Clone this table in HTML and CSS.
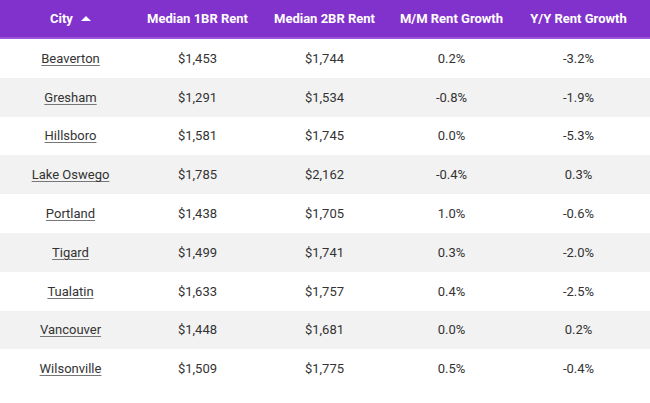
FILE: index.html
```html
<!DOCTYPE html>
<html lang="en">
<head>
<meta charset="utf-8">
<title>Rent Table</title>
<link rel="stylesheet" href="styles.css">
</head>
<body>
<div class="table">
  <div class="row head">
    <div class="cell">City <span class="caret"></span></div>
    <div class="cell">Median 1BR Rent</div>
    <div class="cell">Median 2BR Rent</div>
    <div class="cell">M/M Rent Growth</div>
    <div class="cell">Y/Y Rent Growth</div>
  </div>
  <div class="row"><div class="cell"><a href="#">Beaverton</a></div><div class="cell">$1,453</div><div class="cell">$1,744</div><div class="cell">0.2%</div><div class="cell">-3.2%</div></div>
  <div class="row alt"><div class="cell"><a href="#">Gresham</a></div><div class="cell">$1,291</div><div class="cell">$1,534</div><div class="cell">-0.8%</div><div class="cell">-1.9%</div></div>
  <div class="row"><div class="cell"><a href="#">Hillsboro</a></div><div class="cell">$1,581</div><div class="cell">$1,745</div><div class="cell">0.0%</div><div class="cell">-5.3%</div></div>
  <div class="row alt"><div class="cell"><a href="#">Lake Oswego</a></div><div class="cell">$1,785</div><div class="cell">$2,162</div><div class="cell">-0.4%</div><div class="cell">0.3%</div></div>
  <div class="row"><div class="cell"><a href="#">Portland</a></div><div class="cell">$1,438</div><div class="cell">$1,705</div><div class="cell">1.0%</div><div class="cell">-0.6%</div></div>
  <div class="row alt"><div class="cell"><a href="#">Tigard</a></div><div class="cell">$1,499</div><div class="cell">$1,741</div><div class="cell">0.3%</div><div class="cell">-2.0%</div></div>
  <div class="row"><div class="cell"><a href="#">Tualatin</a></div><div class="cell">$1,633</div><div class="cell">$1,757</div><div class="cell">0.4%</div><div class="cell">-2.5%</div></div>
  <div class="row alt"><div class="cell"><a href="#">Vancouver</a></div><div class="cell">$1,448</div><div class="cell">$1,681</div><div class="cell">0.0%</div><div class="cell">0.2%</div></div>
  <div class="row"><div class="cell"><a href="#">Wilsonville</a></div><div class="cell">$1,509</div><div class="cell">$1,775</div><div class="cell">0.5%</div><div class="cell">-0.4%</div></div>
</div>
</body>
</html>
```

FILE: styles.css
```css
html, body {
  margin: 0;
  padding: 0;
  background: #ffffff;
}
body {
  font-family: Roboto, "Liberation Sans", Arial, sans-serif;
  font-size: 13px;
  color: #333333;
}
.table {
  display: flex;
  flex-direction: column;
  width: 650px;
}
.row {
  display: grid;
  grid-template-columns: repeat(5, 1fr);
  padding: 0 8px 0 7px;
  height: 38.8px;
  align-items: center;
  background: #ffffff;
}
.row.alt {
  background: #f2f2f2;
}
.row.head {
  height: 37px;
  background: #8132cd;
  border-bottom: 2px solid #9d55dc;
  color: #ffffff;
  font-weight: 700;
}
.cell {
  text-align: center;
  white-space: nowrap;
}
.cell a {
  color: #333333;
  text-decoration: underline;
  text-decoration-color: #777777;
  text-underline-offset: 2px;
}
.caret {
  display: inline-block;
  width: 0;
  height: 0;
  margin-left: 5px;
  vertical-align: 2px;
  border-left: 5px solid transparent;
  border-right: 5px solid transparent;
  border-bottom: 5px solid #ffffff;
}
```
